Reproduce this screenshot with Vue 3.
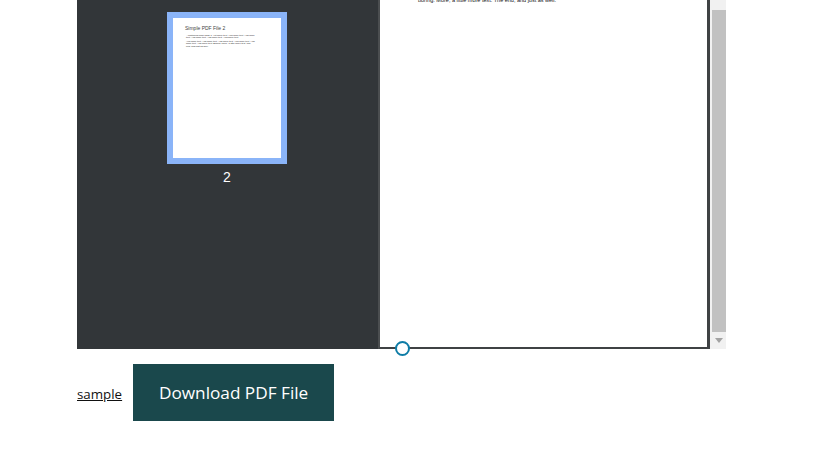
<template>
  <div class="page-wrap">
    <div class="viewer">
      <div class="sidebar">
        <div class="thumb">
          <div class="thumb-page">
            <h4>Simple PDF File 2</h4>
            <p>...continued from page 1. Yet more text. And more text. And more text. And more text. And more text. And more text.</p>
            <p>And more text. And more text. And more text. And more text. And more text. And more text. Boring. More, a little more text. The end, and just as well.</p>
          </div>
        </div>
        <div class="thumb-num">2</div>
      </div>
      <div class="doc">
        <div class="doc-page">
          <p class="doc-line">boring.  More, a little more text. The end, and just as well.</p>
        </div>
      </div>
      <div class="scrollbar">
        <div class="scroll-thumb"></div>
        <div class="scroll-down"></div>
      </div>
      <div class="handle"></div>
    </div>
    <div class="actions">
      <a class="sample" href="#">sample</a>
      <a class="download" href="#">Download PDF File</a>
    </div>
  </div>
</template>

<script setup>
</script>

<style scoped>
.page-wrap {
  width: 824px;
  height: 465px;
  padding-left: 77px;
  box-sizing: border-box;
  overflow: hidden;
  font-family: "Open Sans", sans-serif;
  background: #fff;
}

.viewer {
  position: relative;
  display: flex;
  width: 649px;
  height: 349px;
}

.sidebar {
  width: 301px;
  background: #323639;
  display: flex;
  flex-direction: column;
  align-items: center;
  padding: 12px 1px 0 0;
  box-sizing: border-box;
}

.thumb {
  width: 120px;
  height: 152px;
  box-sizing: border-box;
  border: 6px solid #8ab4f8;
  background: #fff;
}

.thumb-page {
  padding: 7px 0 0 12px;
  font-family: "Liberation Sans", sans-serif;
  color: #444;
}

.thumb-page h4 {
  margin: 0 0 3.5px;
  font-size: 5px;
  line-height: 6px;
  font-weight: normal;
}

.thumb-page p {
  margin: 0 0 1.5px 1px;
  width: 69px;
  font-size: 2.4px;
  line-height: 2.4px;
  color: #222;
}

.thumb-num {
  margin-top: 5px;
  font-family: "Liberation Sans", sans-serif;
  font-size: 14px;
  line-height: 16px;
  color: #fff;
}

.doc {
  width: 332px;
  border-left: 2px solid #4b4e50;
  border-right: 3px solid #3f4244;
  border-bottom: 2px solid #3f4244;
  box-sizing: border-box;
  background: #fff;
  overflow: hidden;
}

.doc-page {
  padding-left: 38px;
  margin-top: -4px;
}

.doc-line {
  margin: 0;
  font-family: "Liberation Sans", sans-serif;
  font-size: 5.5px;
  line-height: 9px;
  color: #111;
  white-space: pre;
}

.scrollbar {
  flex: 1;
  background: #f1f1f1;
  display: flex;
  flex-direction: column;
  align-items: center;
  padding-left: 2px;
  box-sizing: border-box;
}

.scroll-thumb {
  width: 100%;
  margin-top: 10px;
  height: 322px;
  background: #c1c1c1;
}

.scroll-down {
  margin-top: 6px;
  width: 0;
  height: 0;
  border-left: 4px solid transparent;
  border-right: 4px solid transparent;
  border-top: 5px solid #a3a3a3;
}

.handle {
  position: absolute;
  left: 318px;
  top: 341px;
  width: 15px;
  height: 15px;
  box-sizing: border-box;
  border: 2px solid #0e7ca6;
  border-radius: 50%;
  background: #fff;
}

.actions {
  display: flex;
  align-items: center;
  gap: 11px;
  margin-top: 15px;
}

.sample {
  font-size: 13.33px;
  line-height: 16px;
  margin-top: 2px;
  color: #111;
  text-decoration: underline;
}

.download {
  width: 201px;
  height: 57px;
  display: flex;
  align-items: center;
  justify-content: center;
  background: #1a484c;
  color: #fff;
  font-size: 17.2px;
  text-decoration: none;
}
</style>
